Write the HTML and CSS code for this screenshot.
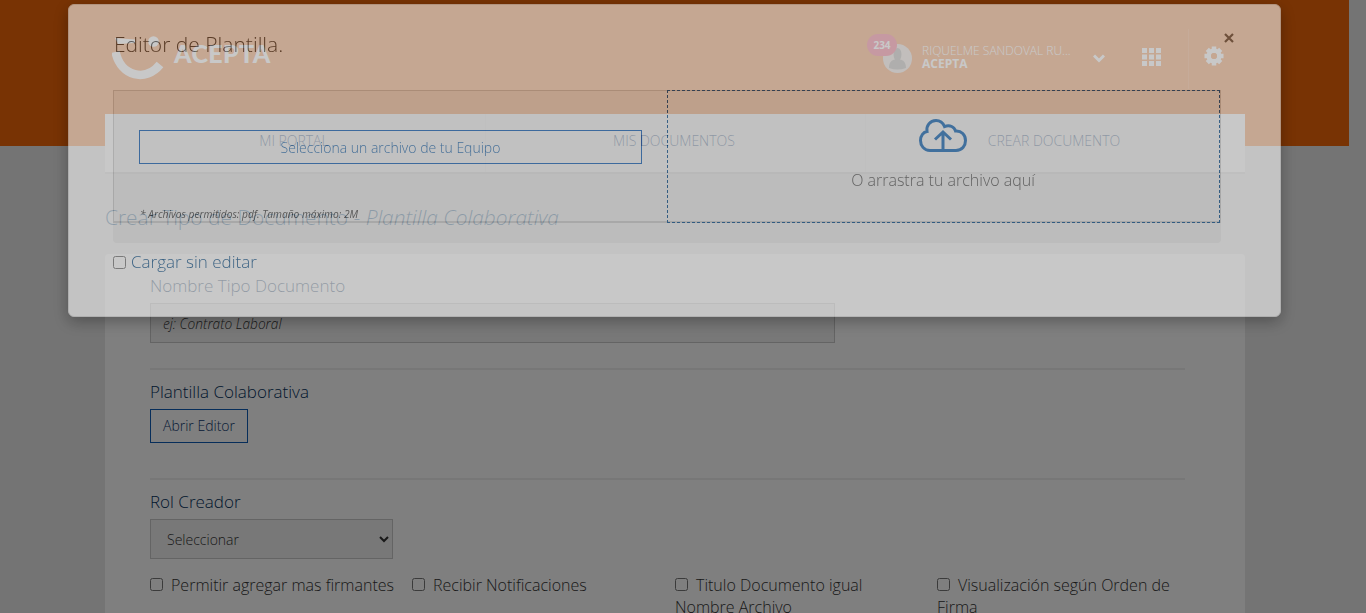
FILE: index.html
```html
<!DOCTYPE html>
<html lang="es">
<head>
<meta charset="utf-8">
<title>Acepta</title>
<link rel="stylesheet" href="styles.css">
</head>
<body>
<div class="page">
  <header class="banner">
    <div class="topbar">
      <div class="brand">
        <svg width="56" height="46" viewBox="0 0 56 46"><path d="M3.500 16C9 41 34 46 48 28.500" fill="none" stroke="#fff" stroke-width="8.500"/><path d="M3 2L23 3.500V7L6 8Z" fill="#fff"/><circle cx="41.500" cy="5.500" r="5.300" fill="#fff"/></svg>
        <span class="brand-name">ACEPTA</span>
      </div>
      <div class="user">
        <div class="avatar">
          <svg width="29" height="29" viewBox="0 0 29 29"><circle cx="14.500" cy="14.500" r="14.500" fill="#e0d0c6"/><path d="M6 24c0-6 3-8 6-8.500-2-2-2.500-11 2.500-11.500 5 .5 4.500 9.500 2.500 11.500 3 .5 6 2.500 6 8.500q-8.500 3-17 0z" fill="#8c8782"/></svg>
          <span class="badge">234</span>
        </div>
        <div class="who"><span>RIQUELME SANDOVAL RU...</span><b>ACEPTA</b></div>
        <svg class="chev" width="12" height="9" viewBox="0 0 12 9"><path d="M1 1.500L6 6.500L11 1.500" fill="none" stroke="#fff" stroke-width="3"/></svg>
        <svg class="grid" width="19" height="18" viewBox="0 0 19 18" fill="#fff"><path d="M0 0h5v5H0zM7 0h5v5H7zM14 0h5v5h-5zM0 6.500h5v5H0zM7 6.500h5v5H7zM14 6.500h5v5h-5zM0 13h5v5H0zM7 13h5v5H7zM14 13h5v5h-5z"/></svg>
        <div class="settings"><svg width="20" height="20" viewBox="0 0 20 20"><circle cx="10" cy="10" r="5.200" fill="none" stroke="#fff" stroke-width="4.600"/><g stroke="#fff" stroke-width="4.500"><path d="M10 .5V4M10 16v3.500M.5 10H4M16 10h3.500M3.300 3.300l2.300 2.300M14.400 14.400l2.300 2.300M3.300 16.700l2.300-2.300M14.400 5.600l2.300-2.300"/></g><circle cx="10" cy="10" r="3" fill="#f06608"/></svg></div>
      </div>
    </div>
  </header>
  <nav class="menu"><a>MI PORTAL</a><a>MIS DOCUMENTOS</a><a>CREAR DOCUMENTO</a></nav>
  <h1 class="title">Crear Tipo de Documento - <i>Plantilla Colaborativa</i></h1>
  <main class="card">
    <label class="label">Nombre Tipo Documento</label>
    <input class="field" type="text" placeholder="ej: Contrato Laboral">
    <section class="section">
      <h2 class="label">Plantilla Colaborativa</h2>
      <button class="outline">Abrir Editor</button>
    </section>
    <section class="section">
      <h2 class="label">Rol Creador</h2>
      <select class="role"><option>Seleccionar</option></select>
      <div class="checks">
        <label><input type="checkbox">Permitir agregar mas firmantes</label>
        <label><input type="checkbox">Recibir Notificaciones</label>
        <label><input type="checkbox">Titulo Documento igual Nombre Archivo</label>
        <label><input type="checkbox">Visualización según Orden de Firma</label>
      </div>
    </section>
  </main>
</div>
<div class="backdrop"></div>
<div class="modal">
  <div class="modal-head"><h3>Editor de Plantilla.</h3>
    <svg width="10" height="10" viewBox="0 0 10 10"><path d="M1 1L9 9M9 1L1 9" stroke="#000" stroke-opacity=".6" stroke-width="2.200"/></svg>
  </div>
  <div class="panel">
    <div class="panel-row">
      <div class="pick">
        <button class="outline choose">Selecciona un archivo de tu Equipo</button>
        <small>* Archivos permitidos: pdf. Tamaño máximo: 2M</small>
      </div>
      <div class="drop">
        <svg width="48" height="34" viewBox="0 0 48 34" fill="none" stroke="#1264b4" stroke-width="3"><path d="M11 31.500C5 31.500 1.500 26.500 1.500 21.500C1.500 16.500 4.500 13 8 12.500C7 7 11 1.500 17 1.500C21 1.500 24 4 25.500 7.500C31 5.500 35.500 8 36.500 12C42.500 11.500 46.500 16 46.500 21.500C46.500 27 43 31.500 37 31.500Z"/><path d="M24 31V13M16 20.500L24 13L32 20.500"/></svg>
        <p>O arrastra tu archivo aquí</p>
      </div>
    </div>
  </div>
  <label class="noedit"><input type="checkbox">Cargar sin editar</label>
</div>
</body>
</html>
```
FILE: styles.css
```css
* { box-sizing: border-box; }
body { margin: 0; height: 613px; overflow: hidden; background: #e8e8e8; font-family: "Open Sans", sans-serif; font-weight: 300; color: #333; }
h1, h2, h3, p { margin: 0; font-weight: 300; }
input, button, select { font-family: inherit; font-weight: 300; margin: 0; }
input[type="checkbox"] { width: 13px; height: 13px; }
svg { display: block; flex: none; }
.page { width: 1349px; height: 613px; overflow: hidden; }
.banner { height: 146px; background: #f06608; }
.topbar { width: 1140px; margin-left: 105px; height: 114px; display: flex; justify-content: space-between; }
.brand { display: flex; padding: 36px 0 0 7px; color: #fff; }
.brand-name { font: 900 25px/35px Lato, sans-serif; margin-left: 6px; letter-spacing: .4px; }
.user { display: flex; align-items: flex-start; width: 362px; color: #fff; }
.avatar { position: relative; margin-top: 44px; }
.badge { position: absolute; left: -16px; top: -10px; width: 30px; height: 22px; border-radius: 11px; background: #f4264e; font-size: 10px; font-weight: 700; line-height: 22px; text-align: center; }
.who { margin: 44px 0 0 10px; width: 171px; font-size: 12px; line-height: 13px; display: flex; flex-direction: column; white-space: nowrap; }
.who b { font-weight: 700; }
.chev { margin-top: 54px; }
.grid { margin: 48px 22px 0 37px; }
.settings { height: 60px; margin-top: 29px; padding: 17px 0 0 20px; border-left: 1px solid #f37a28; }
.user .grid { margin-right: 22px; }
.user { width: 362px; }
.settings { flex: none; }
.menu { width: 1140px; height: 60px; margin: -32px 0 0 105px; display: grid; grid-template-columns: 1fr 1fr 1fr; background: #fff; border-bottom: 2px solid #d4d4d4; }
.menu a { font-size: 14px; line-height: 54px; padding-right: 3px; text-align: center; color: #0d3d7a; border-left: 1px solid #f5f5f5; }
.menu a:first-child { border: 0; padding-right: 2px; }
.title { margin: 28px 0 0 105px; font-size: 20.9px; line-height: 30px; color: #0c5287; }
.card { margin: 22px 0 0 105px; width: 1140px; height: 400px; padding: 20px 60px 0 45px; background: #fff; border-radius: 4px; }
.label { display: block; font-size: 17px; line-height: 24px; color: #04305c; }
.field { display: block; width: 685px; height: 40px; margin: 5px 0 25px; padding: 0 12px; border: 1px solid #c8c8c8; background: #f0f0f0; font-size: 13.7px; font-style: italic; }
.field::placeholder { color: #333; }
.section { height: 110px; border-top: 2px solid #efefef; padding-top: 10px; }
.outline { display: block; height: 34px; padding: 0 12px 1px; border: 1px solid #0c5bb4; background: transparent; font-size: 14px; color: #0b356b; }
.section .outline { width: 98px; margin-top: 5px; }
.role { display: block; width: 243px; height: 40px; margin-top: 5px; padding: 0 12px; border: 1px solid #c8c8c8; border-radius: 0; background: #f0f0f0; font-size: 14px; color: #333; }
.checks { display: grid; grid-template-columns: 262px 263px 262px 248px; margin-top: 15px; font-size: 16px; line-height: 22px; }
.checks label { padding-right: 15px; }
.checks label:first-child { padding: 0; }
.checks input { margin-right: 8px; }
.backdrop { position: fixed; inset: 0; background: rgba(0,0,0,.5); }
.modal { position: fixed; left: 68px; top: 4px; width: 1213px; height: 312.5px; padding: 0 59px 0 44px; border: 1px solid #dcdcdc; border-radius: 6px; background: #fff; box-shadow: 0 5px 15px rgba(0,0,0,.5); opacity: .567; }
.modal-head { height: 85px; display: flex; justify-content: space-between; padding: 24px 0 0 1px; }
.modal-head h3 { font-size: 21px; line-height: 30px; color: #444; }
.modal-head svg { margin: 4px -13px 0 0; }
.panel { height: 153px; background: #f2f2f2; border-radius: 4px; }
.panel-row { height: 133px; display: flex; border: 1px solid #d0d0d0; border-bottom-width: 2px; }
.pick { width: 553px; padding: 39px 25px 0; }
.choose { width: 503px; padding-bottom: 0; color: #1b64ab; }
.pick small { display: block; margin: 43px 0 0 1px; font-size: 10.2px; line-height: 14px; font-style: italic; font-weight: 400; color: #444; }
.drop { width: 553px; flex: none; margin: -1px 0 0; height: 133px; border: 1px dashed #004b8d; display: flex; flex-direction: column; align-items: center; padding: 28px 1px 0 0; }
.drop p { margin-top: 15px; font-size: 16px; line-height: 24px; color: #555; }
.noedit { display: flex; align-items: center; gap: 5px; margin-top: 7px; font-size: 17px; line-height: 24px; color: #0b4f88; }
.user .grid { margin-right: 22px; }
.user .settings { margin-left: 0; padding-left: 20px; }
.user .grid + .settings { margin-left: 5px; padding-left: 15px; }
```
